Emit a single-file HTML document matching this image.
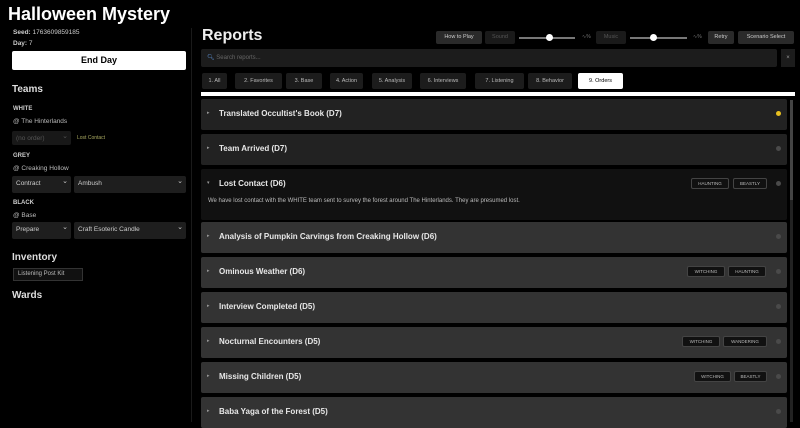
<!DOCTYPE html>
<html><head><style>
*{box-sizing:border-box;margin:0;padding:0}
body{width:800px;height:422px;overflow:hidden;background:#000;color:#ddd;font-family:"Liberation Sans",sans-serif;position:relative}
.a{position:absolute}
.sel{position:absolute;background:#1e1e1e;color:#ccc;font-size:6.5px;padding:4px 4px;border-radius:2px}
.sel:after{content:"⌄";position:absolute;right:3px;top:1px;font-size:7px}
.btn{position:absolute;top:31px;height:13px;background:#2a2a2a;color:#ccc;font-size:5.5px;line-height:13px;text-align:center;border-radius:2px}
.tab{position:absolute;top:73px;height:16px;background:#1c1c1c;color:#bbb;font-size:5.5px;line-height:16px;text-align:center;border-radius:2px}
.row{position:absolute;left:201px;width:586px;height:31px;background:#333;border-radius:2px}
.row .t{position:absolute;left:18px;top:10px;font-size:8px;font-weight:bold;color:#e8e8e8}
.row .ar{position:absolute;left:6px;top:11px;font-size:5px;color:#999}
.row .d{position:absolute;right:6px;top:12px;width:5px;height:5px;border-radius:50%;background:#4a4a4a}
.tag{position:absolute;top:9px;height:11px;background:#111;border:1px solid #444;color:#bbb;font-size:4.5px;line-height:9px;text-align:center;border-radius:2px}
.slider{position:absolute;top:37px;height:2px;background:#777}
.knob{position:absolute;top:34px;width:7px;height:7px;border-radius:50%;background:#fff}
</style></head><body>
<div class="a" style="left:8px;top:4px;font-size:18px;font-weight:bold;color:#fff">Halloween Mystery</div>
<div class="a" style="left:13px;top:29px;font-size:6.5px;color:#ccc"><b>Seed:</b> 1763609859185</div>
<div class="a" style="left:13px;top:40px;font-size:6.5px;color:#ccc"><b>Day:</b> 7</div>
<div class="a" style="left:12px;top:51px;width:174px;height:19px;background:#fff;color:#000;font-size:9px;font-weight:bold;text-align:center;line-height:19px;border-radius:2px">End Day</div>
<div class="a" style="left:12px;top:84px;font-size:10px;font-weight:bold;color:#ddd">Teams</div>
<div class="a" style="left:13px;top:106px;font-size:6px;font-weight:bold;color:#ccc">WHITE</div>
<div class="a" style="left:13px;top:118px;font-size:6.5px;color:#bbb">@ The Hinterlands</div>
<div class="sel" style="left:12px;top:131px;width:59px;height:14px;color:#555;background:#181818">(no order)</div>
<div class="a" style="left:77px;top:135px;font-size:5px;color:#a8a860">Lost Contact</div>
<div class="a" style="left:13px;top:153px;font-size:6px;font-weight:bold;color:#ccc">GREY</div>
<div class="a" style="left:13px;top:165px;font-size:6.5px;color:#bbb">@ Creaking Hollow</div>
<div class="sel" style="left:12px;top:176px;width:59px;height:17px">Contract</div>
<div class="sel" style="left:74px;top:176px;width:112px;height:17px">Ambush</div>
<div class="a" style="left:13px;top:200px;font-size:6px;font-weight:bold;color:#ccc">BLACK</div>
<div class="a" style="left:13px;top:212px;font-size:6.5px;color:#bbb">@ Base</div>
<div class="sel" style="left:12px;top:222px;width:59px;height:17px">Prepare</div>
<div class="sel" style="left:74px;top:222px;width:112px;height:17px">Craft Esoteric Candle</div>
<div class="a" style="left:12px;top:252px;font-size:10px;font-weight:bold;color:#ddd">Inventory</div>
<div class="a" style="left:13px;top:268px;width:70px;height:13px;border:1px solid #333;background:#111;font-size:6px;line-height:11px;padding-left:4px;color:#bbb">Listening Post Kit</div>
<div class="a" style="left:12px;top:290px;font-size:10px;font-weight:bold;color:#ddd">Wards</div>
<div class="a" style="left:191px;top:28px;width:1px;height:394px;background:#1a1a1a"></div>

<div class="a" style="left:202px;top:27px;font-size:16px;font-weight:bold;color:#eee">Reports</div>
<div class="btn" style="left:436px;width:46px">How to Play</div>
<div class="btn" style="left:485px;width:30px;background:#1a1a1a;color:#555">Sound</div>
<div class="slider" style="left:519px;width:56px"></div><div class="knob" style="left:546px"></div>
<div class="a" style="left:582px;top:34px;font-size:5px;color:#777">∿%</div>
<div class="btn" style="left:596px;width:30px;background:#1a1a1a;color:#555">Music</div>
<div class="slider" style="left:630px;width:57px"></div><div class="knob" style="left:650px"></div>
<div class="a" style="left:693px;top:34px;font-size:5px;color:#777">∿%</div>
<div class="btn" style="left:708px;width:26px">Retry</div>
<div class="btn" style="left:738px;width:56px">Scenario Select</div>
<div class="a" style="left:201px;top:49px;width:576px;height:18px;background:#1c1c1c;border-radius:2px;font-size:6px;color:#666;line-height:18px;padding-left:6px"><span style="color:#5a8ac8">🔍︎</span> Search reports...</div>
<div class="a" style="left:781px;top:49px;width:14px;height:18px;background:#1c1c1c;font-size:6px;color:#999;text-align:center;line-height:18px">×</div>
<div class="tab" style="left:202px;width:25px">1. All</div>
<div class="tab" style="left:235px;width:47px">2. Favorites</div>
<div class="tab" style="left:286px;width:36px">3. Base</div>
<div class="tab" style="left:330px;width:33px">4. Action</div>
<div class="tab" style="left:372px;width:40px">5. Analysis</div>
<div class="tab" style="left:420px;width:46px">6. Interviews</div>
<div class="tab" style="left:475px;width:49px">7. Listening</div>
<div class="tab" style="left:528px;width:44px">8. Behavior</div>
<div class="tab" style="left:578px;width:45px;background:#fff;color:#000">9. Orders</div>
<div class="a" style="left:201px;top:92px;width:594px;height:4px;background:#fff"></div>
<div class="a" style="left:790px;top:100px;width:3px;height:322px;background:#222"></div>
<div class="a" style="left:790px;top:100px;width:3px;height:100px;background:#444"></div>

<div class="row" style="top:99px;background:#222"><span class="ar">▸</span><span class="t">Translated Occultist's Book (D7)</span><span class="d" style="background:#e8c020"></span></div>
<div class="row" style="top:134px;background:#222"><span class="ar">▸</span><span class="t">Team Arrived (D7)</span><span class="d"></span></div>
<div class="row" style="top:169px;height:51px;background:#111"><span class="ar">▾</span><span class="t">Lost Contact (D6)</span><span class="tag" style="left:490px;width:38px">HAUNTING</span><span class="tag" style="left:532px;width:34px">BEASTLY</span><span class="d"></span>
<div class="a" style="left:7px;top:29px;font-size:6px;color:#bbb">We have lost contact with the WHITE team sent to survey the forest around The Hinterlands. They are presumed lost.</div></div>
<div class="row" style="top:222px"><span class="ar">▸</span><span class="t">Analysis of Pumpkin Carvings from Creaking Hollow (D6)</span><span class="d"></span></div>
<div class="row" style="top:257px"><span class="ar">▸</span><span class="t">Ominous Weather (D6)</span><span class="tag" style="left:486px;width:38px">WITCHING</span><span class="tag" style="left:527px;width:38px">HAUNTING</span><span class="d"></span></div>
<div class="row" style="top:292px"><span class="ar">▸</span><span class="t">Interview Completed (D5)</span><span class="d"></span></div>
<div class="row" style="top:327px"><span class="ar">▸</span><span class="t">Nocturnal Encounters (D5)</span><span class="tag" style="left:481px;width:38px">WITCHING</span><span class="tag" style="left:522px;width:44px">WANDERING</span><span class="d"></span></div>
<div class="row" style="top:362px"><span class="ar">▸</span><span class="t">Missing Children (D5)</span><span class="tag" style="left:493px;width:37px">WITCHING</span><span class="tag" style="left:533px;width:33px">BEASTLY</span><span class="d"></span></div>
<div class="row" style="top:397px"><span class="ar">▸</span><span class="t">Baba Yaga of the Forest (D5)</span><span class="d"></span></div>
</body></html>
